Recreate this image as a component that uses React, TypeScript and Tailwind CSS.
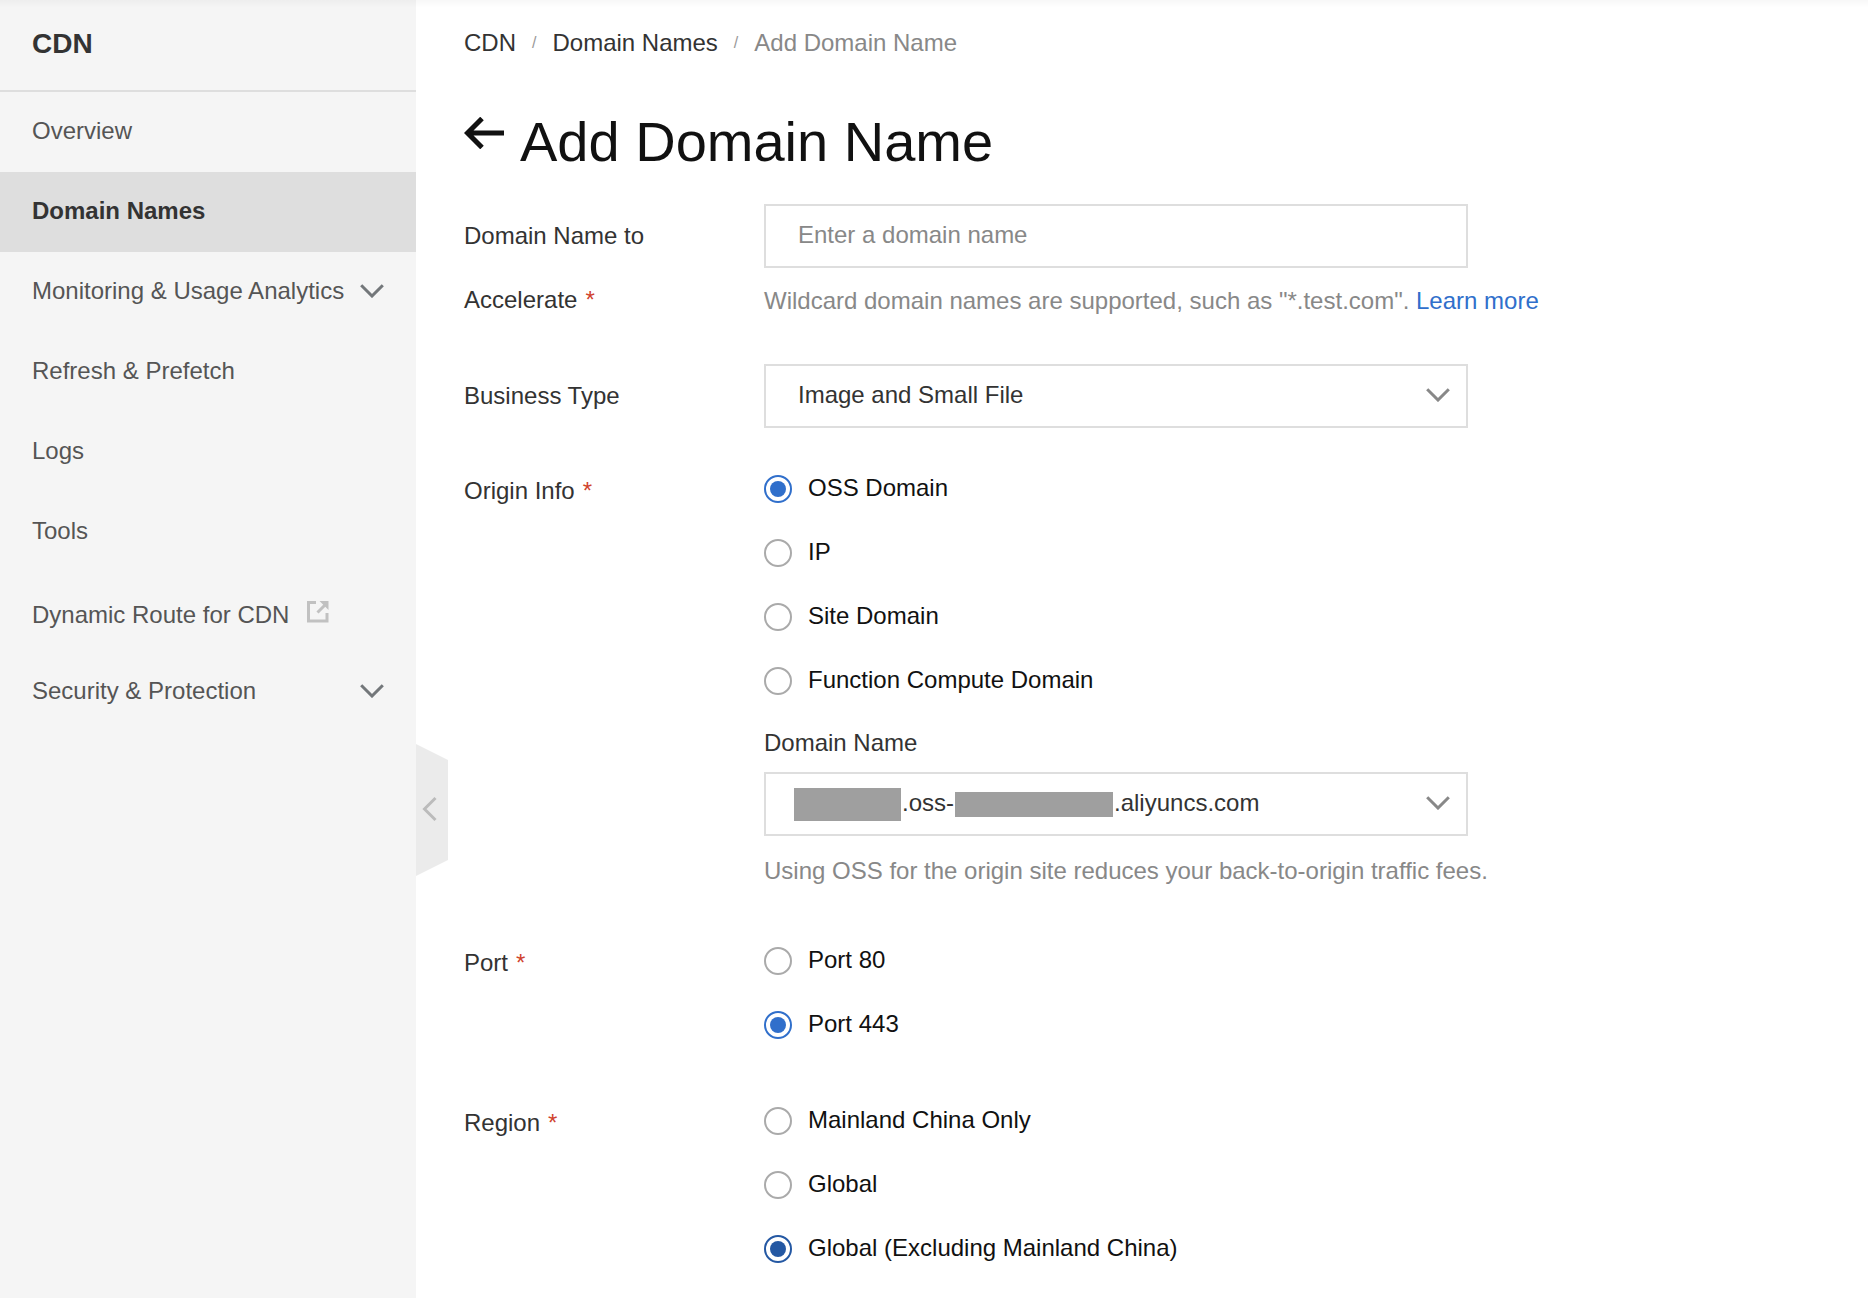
import { useState, type ReactNode } from 'react';

function ChevronDown({ className }: { className: string }) {
  return (
    <svg className={className} width="24" height="14" viewBox="0 0 24 14" fill="none" stroke="currentColor" strokeWidth="3" aria-hidden="true">
      <path d="M1.2 1.2 12 12 22.8 1.2" />
    </svg>
  );
}

function ExternalIcon() {
  return (
    <svg className="mb-1.5 text-[#c1c1c1]" width="22" height="22" viewBox="0 0 22 22" fill="none" stroke="currentColor" strokeWidth="3" aria-hidden="true">
      <path d="M9 1.5H1.5v18.500h18.500V12" />
      <path d="M10.500 11.500 18 4" />
      <path d="M12.500 0H21.500V9Z" fill="currentColor" stroke="none" />
    </svg>
  );
}

const navItems = [
  { label: 'Overview' },
  { label: 'Domain Names', active: true },
  { label: 'Monitoring & Usage Analytics', expandable: true },
  { label: 'Refresh & Prefetch' },
  { label: 'Logs' },
  { label: 'Tools' },
  { label: 'Dynamic Route for CDN', external: true },
  { label: 'Security & Protection', expandable: true },
];

function Sidebar() {
  return (
    <aside className="relative w-[416px] shrink-0 bg-[#f5f5f5]">
      <div className="flex h-[92px] items-center border-b-2 border-[#dedede] px-8 pb-0.5 text-[28px] font-bold text-[#333]">CDN</div>
      <nav>
        {navItems.map((item) =>
          item.expandable ? (
            <button key={item.label} type="button" className="flex h-20 w-full items-center justify-between px-8 pb-0.5 whitespace-nowrap text-[#555]">
              {item.label}
              <ChevronDown className="text-[#73777a]" />
            </button>
          ) : (
            <a
              key={item.label}
              href="#"
              aria-current={item.active ? 'page' : undefined}
              className={
                item.active
                  ? 'flex h-20 items-center bg-[#dedede] px-8 pb-0.5 font-bold text-[#333]'
                  : item.external
                    ? 'flex h-20 items-center gap-[18px] px-8 pt-1.5 text-[#555]'
                    : 'flex h-20 items-center px-8 pb-0.5 text-[#555]'
              }
            >
              {item.label}
              {item.external && <ExternalIcon />}
            </a>
          ),
        )}
      </nav>
      <button type="button" aria-label="Collapse menu" className="absolute top-[744px] left-full h-[132px] w-8">
        <svg width="32" height="132" viewBox="0 0 32 132" fill="none" aria-hidden="true">
          <path d="M0 0 32 16V116L0 132Z" fill="#ebebeb" />
          <path d="M19.500 54 8.500 65 19.500 76" stroke="#bbb" strokeWidth="3" />
        </svg>
      </button>
    </aside>
  );
}

function Field({ label, required, offset, children }: { label: ReactNode; required?: boolean; offset?: boolean; children: ReactNode }) {
  return (
    <div className="flex">
      <div className={offset ? 'w-[300px] shrink-0 pt-[3px] pr-12 leading-[64px] text-[#333]' : 'w-[300px] shrink-0 pr-12 leading-[64px] text-[#333]'}>
        {label}
        {required && <span className="ml-2 text-[#d0432e]">*</span>}
      </div>
      <div className="min-w-0 flex-1">{children}</div>
    </div>
  );
}

function RadioList({ name, options, initial, dark }: { name: string; options: string[]; initial: string; dark?: boolean }) {
  const [value, setValue] = useState(initial);
  return (
    <div role="radiogroup" aria-label={name}>
      {options.map((option) => (
        <label key={option} className="flex h-16 items-center gap-4 text-[#111]">
          <input
            type="radio"
            name={name}
            checked={value === option}
            onChange={() => setValue(option)}
            className={
              dark
                ? 'mt-0.5 size-7 shrink-0 appearance-none rounded-full border-2 border-[#aaa] bg-clip-content p-1 checked:border-[#2458a3] checked:bg-[#2458a3]'
                : 'mt-0.5 size-7 shrink-0 appearance-none rounded-full border-2 border-[#aaa] bg-clip-content p-1 checked:border-[#306fcb] checked:bg-[#306fcb]'
            }
          />
          {option}
        </label>
      ))}
    </div>
  );
}

const boxClass = 'block h-16 w-full appearance-none rounded-none border-2 border-[#dedede] bg-white px-8 pb-0.5 text-[#333] outline-none placeholder:text-[#888] placeholder:opacity-100';

export default function App() {
  return (
    <div className="relative flex min-h-screen bg-white font-['Liberation_Sans',Arial,sans-serif] text-[24px] leading-9">
      <div className="pointer-events-none absolute inset-x-0 top-0 z-10 h-2 bg-linear-to-b from-black/3 to-transparent" />
      <Sidebar />
      <main className="min-w-0 flex-1 pt-[25px] pr-12 pb-[18px] pl-12">
        <nav aria-label="Breadcrumb" className="flex items-center gap-4">
          <a href="#" className="text-[#333]">CDN</a>
          <span className="text-base text-[#999]">/</span>
          <a href="#" className="text-[#333]">Domain Names</a>
          <span className="text-base text-[#999]">/</span>
          <span className="text-[#888]">Add Domain Name</span>
        </nav>
        <div className="mt-12 flex items-start gap-4">
          <button type="button" aria-label="Back" className="mt-2">
            <svg width="40" height="32" viewBox="0 0 40 32" fill="none" stroke="#111" strokeWidth="5" aria-hidden="true">
              <path d="M3 16H40M18 1.500 3.500 16 18 30.500" />
            </svg>
          </button>
          <h1 className="text-[56px] leading-[66px] text-[#111]">Add Domain Name</h1>
        </div>

        <form className="mt-[29px]">
          <Field label={<label htmlFor="domain">Domain Name to<br />Accelerate</label>} required>
            <input id="domain" type="text" placeholder="Enter a domain name" className={boxClass + ' max-w-[704px]'} />
            <p className="mt-[15px] text-[#888]">
              Wildcard domain names are supported, such as "*.test.com". <a href="#" className="text-[#306fcb]">Learn more</a>
            </p>
          </Field>
          <div className="mt-8">
            <Field label={<label htmlFor="type">Business Type</label>}>
              <div className="relative max-w-[704px]">
                <select id="type" className={boxClass}>
                  <option>Image and Small File</option>
                </select>
                <ChevronDown className="pointer-events-none absolute top-6 right-[18px] text-[#888]" />
              </div>
            </Field>
          </div>
          <div className="mt-7">
            <Field label="Origin Info" required offset>
              <RadioList name="Origin Info" options={['OSS Domain', 'IP', 'Site Domain', 'Function Compute Domain']} initial="OSS Domain" />
              <label htmlFor="origin" className="mt-[13px] mb-[11px] block text-[#333]">Domain Name</label>
              <div className="relative max-w-[704px]">
                <select id="origin" className={boxClass}>
                  <option value="oss" label=" " />
                </select>
                <div className="pointer-events-none absolute inset-0 flex items-center gap-px pl-[30px] text-[#333]">
                  <span className="h-[33px] w-[107px] bg-[#9f9f9f]" />
                  <span className="pb-0.5">.oss-</span>
                  <span className="h-[25px] w-[158px] bg-[#9f9f9f]" />
                  <span className="pb-0.5">.aliyuncs.com</span>
                </div>
                <ChevronDown className="pointer-events-none absolute top-6 right-[18px] text-[#888]" />
              </div>
              <p className="mt-[17px] text-[#888]">Using OSS for the origin site reduces your back-to-origin traffic fees.</p>
            </Field>
          </div>
          <div className="mt-[39px]">
            <Field label="Port" required offset>
              <RadioList name="Port" options={['Port 80', 'Port 443']} initial="Port 443" />
            </Field>
          </div>
          <div className="mt-8">
            <Field label="Region" required offset>
              <RadioList name="Region" options={['Mainland China Only', 'Global', 'Global (Excluding Mainland China)']} initial="Global (Excluding Mainland China)" dark />
            </Field>
          </div>
        </form>
      </main>
    </div>
  );
}
